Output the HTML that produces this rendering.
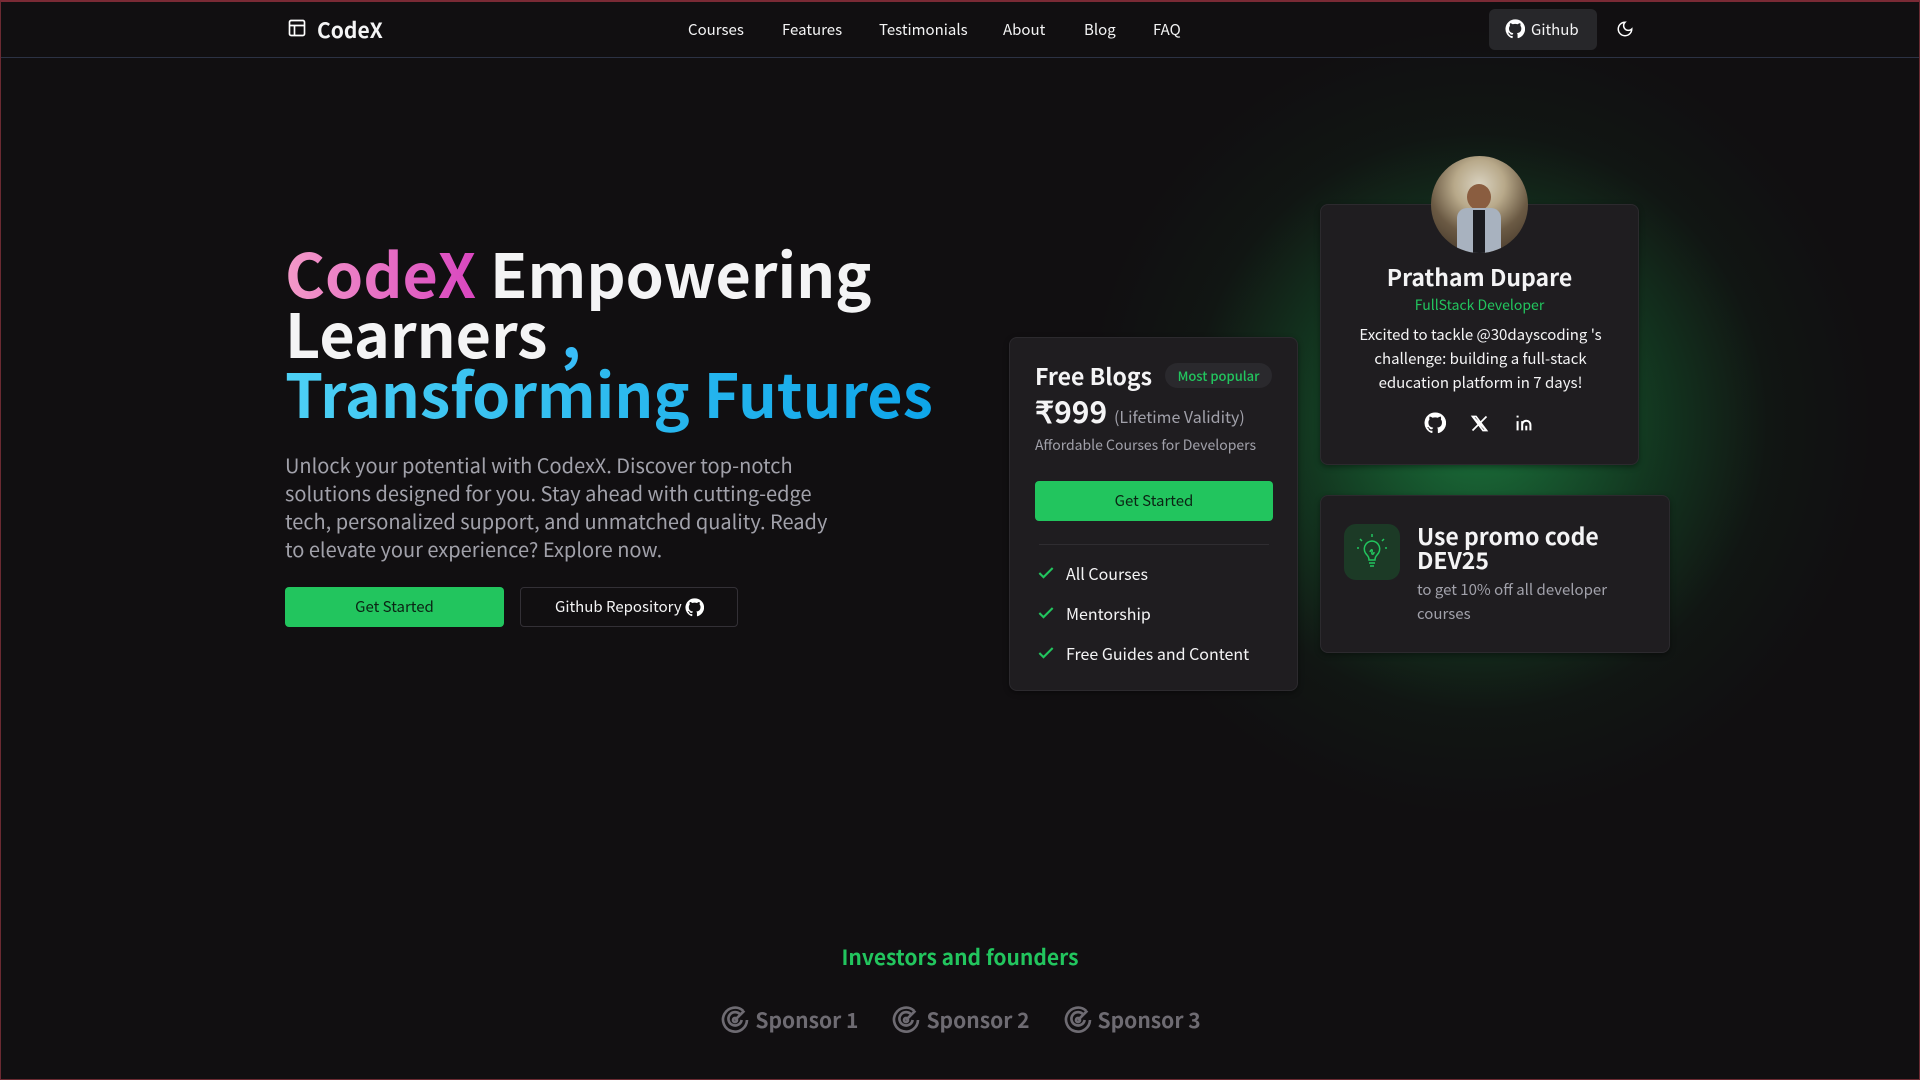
<!DOCTYPE html>
<html><head><meta charset="utf-8">
<style>
*{box-sizing:border-box;margin:0;padding:0}
html,body{width:1920px;height:1080px;overflow:hidden}
body{background:#110f11;font-family:"Noto Sans CJK JP","Liberation Sans",sans-serif;color:#f4f4f5;position:relative;border:1px solid #6b2a32;border-top:2px solid #7a2a35}
.abs{position:absolute}
nav{position:absolute;left:0;top:0;width:1918px;height:56px;border-bottom:1px solid #2c3244}
.glow{position:absolute;left:1478px;top:420px;width:820px;height:820px;margin:-410px 0 0 -410px;border-radius:50%;background:radial-gradient(circle,rgba(34,197,94,.55) 0%,rgba(22,130,60,.35) 30%,rgba(17,60,30,.15) 50%,rgba(17,15,17,0) 68%)}
.card{position:absolute;background:#1f1d20;border:1px solid #2c2a2e;border-radius:8px;box-shadow:0 2px 6px rgba(0,0,0,.4)}
.navlink{position:absolute;top:17px;font-size:15px;color:#f4f4f5}
.item{height:40px;display:flex;align-items:center}
.chk{display:inline-block;width:30px;height:20px}
</style></head><body>
<div class="glow"></div>
<nav>
 <svg class="abs" style="left:286px;top:16px" width="20" height="20" viewBox="0 0 24 24" fill="none" stroke="#fff" stroke-width="2"><rect x="3" y="3" width="18" height="18" rx="2"/><path d="M3 9h18M9 9v12"/></svg>
 <div class="abs" style="left:316px;top:13px;font-size:21px;font-weight:700">CodeX</div>
 <div class="navlink" style="left:687px">Courses</div>
 <div class="navlink" style="left:781px">Features</div>
 <div class="navlink" style="left:878px">Testimonials</div>
 <div class="navlink" style="left:1002px">About</div>
 <div class="navlink" style="left:1083px">Blog</div>
 <div class="navlink" style="left:1152px">FAQ</div>
 <div class="abs" style="left:1488px;top:7px;width:108px;height:41px;background:#27272a;border-radius:6px"></div>
 <svg class="abs" style="left:1504px;top:17px" width="20" height="20" viewBox="0 0 24 24" fill="#fff"><path d="M12 .5a11.5 11.5 0 0 0-3.6 22.4c.6.1.8-.3.8-.6v-2c-3.2.7-3.9-1.5-3.9-1.5-.5-1.3-1.3-1.7-1.3-1.7-1-.7.1-.7.1-.7 1.2.1 1.8 1.2 1.8 1.2 1 1.8 2.8 1.3 3.5 1 .1-.8.4-1.3.7-1.6-2.6-.3-5.3-1.3-5.3-5.7 0-1.3.5-2.3 1.2-3.1-.1-.3-.5-1.5.1-3.1 0 0 1-.3 3.2 1.2a11 11 0 0 1 5.8 0c2.2-1.5 3.2-1.2 3.2-1.2.6 1.6.2 2.8.1 3.1.8.8 1.2 1.9 1.2 3.1 0 4.4-2.7 5.4-5.3 5.7.4.4.8 1.1.8 2.2v3.2c0 .3.2.7.8.6A11.5 11.5 0 0 0 12 .5z"/></svg>
 <div class="abs" style="left:1530px;top:17px;font-size:15px">Github</div>
 <svg class="abs" style="left:1615px;top:18px" width="18" height="18" viewBox="0 0 24 24" fill="none" stroke="#fff" stroke-width="2"><path d="M12 3a6 6 0 0 0 9 9 9 9 0 1 1-9-9z"/></svg>
</nav>

<div class="abs" style="left:284px;top:240px;font-size:61px;font-weight:700;line-height:60px">
 <span style="background:linear-gradient(90deg,#f49ac8,#d946c0);-webkit-background-clip:text;color:transparent">CodeX</span> Empowering<br>Learners <span style="color:#38bdf8">,</span><br>
 <span style="background:linear-gradient(90deg,#4dd0f5,#0ea5e9);-webkit-background-clip:text;color:transparent">Transforming Futures</span>
</div>
<div class="abs" style="left:284px;top:449px;width:548px;font-size:20px;line-height:28px;color:#a1a1aa">Unlock your potential with CodexX. Discover top-notch solutions designed for you. Stay ahead with cutting-edge tech, personalized support, and unmatched quality. Ready to elevate your experience? Explore now.</div>
<div class="abs" style="left:284px;top:585px;width:219px;height:40px;background:#22c55e;border-radius:4px;color:#0b2414;font-size:15px;text-align:center;line-height:40px">Get Started</div>
<div class="abs" style="left:519px;top:585px;width:218px;height:40px;border:1px solid #333036;border-radius:4px;font-size:15px;line-height:38px;padding-left:34px">Github Repository
 <svg style="position:absolute;left:164px;top:10px" width="19" height="19" viewBox="0 0 24 24" fill="#fff"><path d="M12 .5a11.5 11.5 0 0 0-3.6 22.4c.6.1.8-.3.8-.6v-2c-3.2.7-3.9-1.5-3.9-1.5-.5-1.3-1.3-1.7-1.3-1.7-1-.7.1-.7.1-.7 1.2.1 1.8 1.2 1.8 1.2 1 1.8 2.8 1.3 3.5 1 .1-.8.4-1.3.7-1.6-2.6-.3-5.3-1.3-5.3-5.7 0-1.3.5-2.3 1.2-3.1-.1-.3-.5-1.5.1-3.1 0 0 1-.3 3.2 1.2a11 11 0 0 1 5.8 0c2.2-1.5 3.2-1.2 3.2-1.2.6 1.6.2 2.8.1 3.1.8.8 1.2 1.9 1.2 3.1 0 4.4-2.7 5.4-5.3 5.7.4.4.8 1.1.8 2.2v3.2c0 .3.2.7.8.6A11.5 11.5 0 0 0 12 .5z"/></svg></div>

<!-- pricing card -->
<div class="card" style="left:1008px;top:335px;width:289px;height:354px">
 <div class="abs" style="left:25px;top:20px;font-size:23px;font-weight:600">Free Blogs</div>
 <div class="abs" style="left:155px;top:25px;width:107px;height:25px;border-radius:13px;background:#2a292d;color:#22c55e;font-size:13px;text-align:center;line-height:25px;font-weight:500">Most popular</div>
 <div class="abs" style="left:25px;top:50px;font-size:30px;font-weight:700">₹999 <span style="font-size:16px;font-weight:400;color:#a1a1aa">(Lifetime Validity)</span></div>
 <div class="abs" style="left:25px;top:97px;font-size:14px;color:#a1a1aa">Affordable Courses for Developers</div>
 <div class="abs" style="left:25px;top:143px;width:238px;height:40px;background:#22c55e;border-radius:4px;color:#0b2414;font-size:15px;text-align:center;line-height:40px">Get Started</div>
 <div class="abs" style="left:29px;top:206px;width:230px;height:1px;background:#2f2d31"></div>
 <div class="abs" style="left:26px;top:215px;font-size:16px">
  <div class="item"><span class="chk"><svg width="20" height="20" viewBox="0 0 24 24" fill="none" stroke="#22c55e" stroke-width="2.5"><path d="M4 12l5 5L20 6"/></svg></span>All Courses</div>
  <div class="item"><span class="chk"><svg width="20" height="20" viewBox="0 0 24 24" fill="none" stroke="#22c55e" stroke-width="2.5"><path d="M4 12l5 5L20 6"/></svg></span>Mentorship</div>
  <div class="item"><span class="chk"><svg width="20" height="20" viewBox="0 0 24 24" fill="none" stroke="#22c55e" stroke-width="2.5"><path d="M4 12l5 5L20 6"/></svg></span>Free Guides and Content</div>
 </div>
</div>

<!-- profile card -->
<div class="card" style="left:1319px;top:202px;width:319px;height:261px;text-align:center">
 <div class="abs" style="left:0;top:54px;width:100%;font-size:23px;font-weight:600">Pratham Dupare</div>
 <div class="abs" style="left:0;top:90px;width:100%;font-size:14px;color:#22c55e">FullStack Developer</div>
 <div class="abs" style="left:20px;top:118px;width:279px;font-size:15px;line-height:24px">Excited to tackle @30dayscoding 's challenge: building a full-stack education platform in 7 days!</div>
 <svg class="abs" style="left:103px;top:207px" width="22" height="22" viewBox="0 0 24 24" fill="#fff"><path d="M12 .5a11.5 11.5 0 0 0-3.6 22.4c.6.1.8-.3.8-.6v-2c-3.2.7-3.9-1.5-3.9-1.5-.5-1.3-1.3-1.7-1.3-1.7-1-.7.1-.7.1-.7 1.2.1 1.8 1.2 1.8 1.2 1 1.8 2.8 1.3 3.5 1 .1-.8.4-1.3.7-1.6-2.6-.3-5.3-1.3-5.3-5.7 0-1.3.5-2.3 1.2-3.1-.1-.3-.5-1.5.1-3.1 0 0 1-.3 3.2 1.2a11 11 0 0 1 5.8 0c2.2-1.5 3.2-1.2 3.2-1.2.6 1.6.2 2.8.1 3.1.8.8 1.2 1.9 1.2 3.1 0 4.4-2.7 5.4-5.3 5.7.4.4.8 1.1.8 2.2v3.2c0 .3.2.7.8.6A11.5 11.5 0 0 0 12 .5z"/></svg>
 <svg class="abs" style="left:148px;top:208px" width="21" height="21" viewBox="0 0 24 24" fill="none" stroke="#fff" stroke-width="2"><path d="M4 4l16 16M20 4L4 20"/><path d="M4 4h4l12 16h-4z"/></svg>
 <svg class="abs" style="left:192px;top:207px" width="22" height="22" viewBox="0 0 24 24" fill="none" stroke="#fff" stroke-width="2.2"><path d="M5 10v10M5 4v2M10 20v-10M10 14a4.5 4.5 0 0 1 9 0v6M14.5 20v-5"/></svg>
</div>
<div class="abs" style="left:1430px;top:154px;width:97px;height:97px;border-radius:50%;background:radial-gradient(circle at 50% 30%,#d9d2c0 0,#b8a98a 30%,#6b5a44 60%,#3a2e22 100%);overflow:hidden">
 <div class="abs" style="left:36px;top:28px;width:24px;height:26px;border-radius:50%;background:#8a5d40"></div>
 <div class="abs" style="left:26px;top:52px;width:44px;height:50px;border-radius:10px 10px 0 0;background:#a8b2bf"></div>
 <div class="abs" style="left:42px;top:54px;width:12px;height:44px;background:#1b1b1f"></div>
</div>

<!-- promo card -->
<div class="card" style="left:1319px;top:493px;width:350px;height:158px">
 <div class="abs" style="left:23px;top:28px;width:56px;height:56px;border-radius:12px;background:#1c3a26"></div>
 <svg class="abs" style="left:33px;top:36px" width="36" height="40" viewBox="0 0 36 40" fill="none" stroke="#22c55e" stroke-width="1.5"><path d="M18 2v3M6 7l2 2M30 7l-2 2M3 16h2M31 16h2"/><path d="M18 9a8 8 0 0 0-5 14c1 1 2 3 2 5h6c0-2 1-4 2-5a8 8 0 0 0-5-14z"/><path d="M15 31h6M16 34h4M16 20c1-3 3-3 2 0s2 3 2 0"/></svg>
 <div class="abs" style="left:96px;top:27px;font-size:23px;font-weight:600;line-height:24px">Use promo code<br>DEV25</div>
 <div class="abs" style="left:96px;top:82px;width:230px;font-size:15px;line-height:24px;color:#a1a1aa">to get 10% off all developer courses</div>
</div>

<div class="abs" style="left:0;top:940px;width:1918px;text-align:center;font-size:21px;font-weight:700;color:#22c55e">Investors and founders</div>
<div class="abs" style="left:0;top:1002px;width:1918px;display:flex;justify-content:center;gap:32px;font-size:21px;font-weight:700;color:#6e6b72">
 <div style="display:flex;align-items:center;gap:4px"><svg width="32" height="32" viewBox="0 0 24 24" fill="none" stroke="#6e6b72" stroke-width="2"><path d="M18 5a9 9 0 1 0 3 7M16 8a5 5 0 1 0 1 4"/><circle cx="12" cy="12" r="1.5"/><path d="M12 12l7-7"/></svg>Sponsor 1</div>
 <div style="display:flex;align-items:center;gap:4px"><svg width="32" height="32" viewBox="0 0 24 24" fill="none" stroke="#6e6b72" stroke-width="2"><path d="M18 5a9 9 0 1 0 3 7M16 8a5 5 0 1 0 1 4"/><circle cx="12" cy="12" r="1.5"/><path d="M12 12l7-7"/></svg>Sponsor 2</div>
 <div style="display:flex;align-items:center;gap:4px"><svg width="32" height="32" viewBox="0 0 24 24" fill="none" stroke="#6e6b72" stroke-width="2"><path d="M18 5a9 9 0 1 0 3 7M16 8a5 5 0 1 0 1 4"/><circle cx="12" cy="12" r="1.5"/><path d="M12 12l7-7"/></svg>Sponsor 3</div>
</div>
</body></html>
